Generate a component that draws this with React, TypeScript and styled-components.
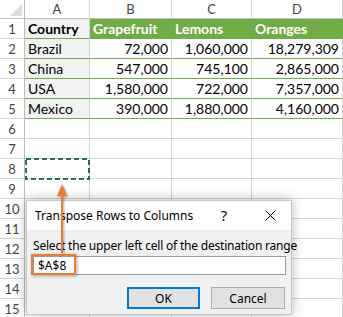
import styled, { createGlobalStyle } from 'styled-components';

const GlobalStyle = createGlobalStyle`
  html, body {
    margin: 0;
    padding: 0;
    background: #ffffff;
    overflow: hidden;
  }
`;

const GRID = '#d4d4d4';
const GREEN = '#70ad47';
const ORANGE = '#ed7d31';

const Page = styled.div`
  position: relative;
  width: 343px;
  height: 317px;
  overflow: hidden;
  font-family: Lato, 'Noto Sans', sans-serif;
`;

const Sheet = styled.div`
  display: grid;
  grid-template-columns: 25px 65px 82px 80px 91px;
  grid-template-rows: 19px repeat(15, 20px);
`;

type Variant = 'corner' | 'col' | 'row' | 'text' | 'bold' | 'num' | 'head' | 'empty';

const Cell = styled.div<{ $v: Variant; $line?: string }>`
  box-sizing: border-box;
  display: flex;
  align-items: center;
  white-space: nowrap;
  overflow: hidden;
  font-size: 14px;
  color: #000;
  border-right: 1px solid ${p => (p.$v === 'head' ? GREEN : GRID)};
  border-bottom: 1px solid ${p => p.$line ?? GRID};
  padding: 0 3px;
  position: relative;
  background: ${p =>
    p.$v === 'head' ? GREEN : p.$v === 'text' || p.$v === 'bold' ? '#f2f2f2' : '#fff'};
  justify-content: ${p =>
    p.$v === 'num' ? 'flex-end' : p.$v === 'col' || p.$v === 'row' ? 'center' : 'flex-start'};
  font-weight: ${p => (p.$v === 'head' || p.$v === 'bold' ? 700 : 400)};
  ${p => p.$v === 'head' && 'color: #fff;'}
  ${p => (p.$v === 'col' || p.$v === 'row') && 'color: #444; font-size: 13px; padding: 0;'}
  ${p => p.$v === 'col' && 'border-bottom-color: #bdbdbd;'}
  ${p => p.$v === 'row' && 'border-right-color: #bdbdbd;'}
  ${p => p.$v === 'corner' && 'border-bottom-color: #bdbdbd; border-right-color: #bdbdbd;'}
`;

const CornerMark = styled.span`
  position: absolute;
  right: 2px;
  bottom: 2px;
  width: 0;
  height: 0;
  border-left: 12px solid transparent;
  border-bottom: 12px solid #dcdcdc;
`;

const Selection = styled.svg`
  position: absolute;
  left: 25px;
  top: 158px;
`;

const Arrow = styled.svg`
  position: absolute;
  left: 54px;
  top: 180px;
  z-index: 3;
  filter: drop-shadow(1px 1px 1px rgba(0, 0, 0, 0.35));
`;

const Dialog = styled.div`
  position: absolute;
  left: 26px;
  top: 200px;
  width: 266px;
  height: 115px;
  box-sizing: border-box;
  border: 1px solid #c8c8c8;
  background: #f0f0f0;
  box-shadow: 0 0 12px rgba(0, 0, 0, 0.28);
  display: flex;
  flex-direction: column;
  font-family: 'Noto Sans', 'Open Sans', sans-serif;
  font-size: 12px;
  color: #000;
  z-index: 2;
`;

const TitleBar = styled.div`
  height: 29px;
  background: #fff;
  display: flex;
  align-items: center;
  padding-left: 8px;
  padding-right: 6px;
  gap: 16px;
`;

const Title = styled.div`
  flex: 1;
  font-size: 12px;
  white-space: nowrap;
`;

const TitleButton = styled.div`
  width: 30px;
  display: flex;
  justify-content: center;
  align-items: center;
  font-size: 14px;
`;

const Body = styled.div`
  display: flex;
  flex-direction: column;
  padding: 8px 5px 0 6px;
`;

const Label = styled.div`
  font-size: 12px;
  line-height: 15px;
  white-space: nowrap;
  letter-spacing: -0.2px;
`;

const InputRow = styled.div`
  position: relative;
  margin-top: 3px;
`;

const Input = styled.div`
  box-sizing: border-box;
  height: 19px;
  background: #fff;
  border: 1px solid #9b9b9b;
  padding-left: 4px;
  display: flex;
  align-items: center;
  font-size: 12px;
`;

const Callout = styled.div`
  position: absolute;
  left: -2px;
  top: -2px;
  width: 45px;
  height: 21px;
  box-sizing: border-box;
  border: 2px solid ${ORANGE};
  box-shadow: 1px 1px 3px rgba(0, 0, 0, 0.35);
`;

const Buttons = styled.div`
  display: flex;
  justify-content: flex-end;
  gap: 11px;
  margin-top: 12px;
  padding-right: 1px;
`;

const Button = styled.div<{ $default?: boolean }>`
  box-sizing: border-box;
  width: ${p => (p.$default ? 73 : 74)}px;
  height: 22px;
  background: #e1e1e1;
  border: ${p => (p.$default ? '2px solid #0078d7' : '1px solid #adadad')};
  display: flex;
  align-items: center;
  justify-content: center;
  font-size: 12px;
`;

const columns = ['A', 'B', 'C', 'D'];

const data: string[][] = [
  ['Country', 'Grapefruit', 'Lemons', 'Oranges'],
  ['Brazil', '72,000', '1,060,000', '18,279,309'],
  ['China', '547,000', '745,100', '2,865,000'],
  ['USA', '1,580,000', '722,000', '7,357,000'],
  ['Mexico', '390,000', '1,880,000', '4,160,000'],
];

export default function App() {
  const rows = Array.from({ length: 15 }, (_, i) => i + 1);
  return (
    <Page>
      <GlobalStyle />
      <Sheet>
        <Cell $v="corner">
          <CornerMark />
        </Cell>
        {columns.map(c => (
          <Cell key={c} $v="col">
            {c}
          </Cell>
        ))}
        {rows.map(r => {
          const values = data[r - 1];
          const line = r <= 5 ? GREEN : GRID;
          return [
            <Cell key={`h${r}`} $v="row">
              {r}
            </Cell>,
            ...columns.map((c, ci) => {
              let v: Variant = 'empty';
              if (values) {
                if (r === 1) v = ci === 0 ? 'bold' : 'head';
                else v = ci === 0 ? 'text' : 'num';
              }
              return (
                <Cell key={`${c}${r}`} $v={v} $line={line}>
                  {values ? values[ci] : ''}
                </Cell>
              );
            }),
          ];
        })}
      </Sheet>

      <Selection width="65" height="22" viewBox="0 0 65 22">
        <rect
          x="1"
          y="1"
          width="63"
          height="20"
          fill="none"
          stroke="#217346"
          strokeWidth="2"
          strokeDasharray="5 3"
        />
      </Selection>

      <Arrow width="16" height="74" viewBox="0 0 16 74">
        <polygon points="8,4 3,16 13,16" fill={ORANGE} />
        <line x1="8" y1="14" x2="8" y2="73" stroke={ORANGE} strokeWidth="2" />
      </Arrow>

      <Dialog>
        <TitleBar>
          <Title>Transpose Rows to Columns</Title>
          <TitleButton>?</TitleButton>
          <TitleButton>
            <svg width="11" height="11" viewBox="0 0 11 11">
              <path d="M0.5 0.5L10.5 10.5M10.5 0.5L0.5 10.5" stroke="#000" strokeWidth="1" />
            </svg>
          </TitleButton>
        </TitleBar>
        <Body>
          <Label>Select the upper left cell of the destination range</Label>
          <InputRow>
            <Input>$A$8</Input>
            <Callout />
          </InputRow>
          <Buttons>
            <Button $default>OK</Button>
            <Button>Cancel</Button>
          </Buttons>
        </Body>
      </Dialog>
    </Page>
  );
}
